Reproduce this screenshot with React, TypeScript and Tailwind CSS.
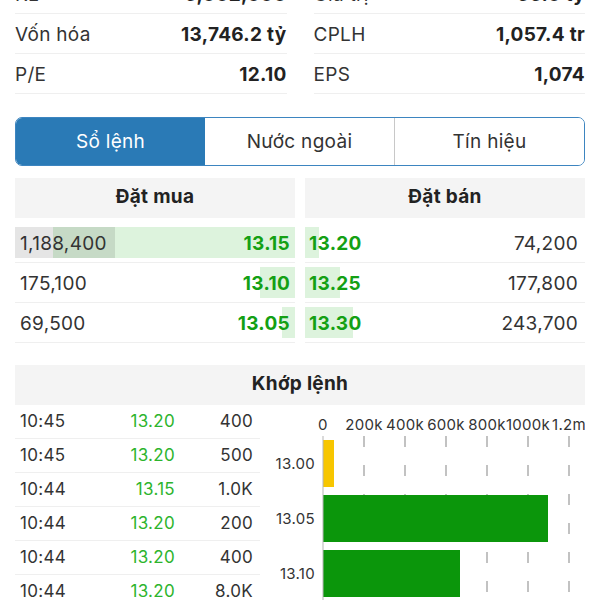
import React from "react";

const stats: [string, string, string, string][] = [
  ["KL", "5,002,000", "Giá trị", "66.0 tỷ"],
  ["Vốn hóa", "13,746.2 tỷ", "CPLH", "1,057.4 tr"],
  ["P/E", "12.10", "EPS", "1,074"],
];

const bids = [
  { vol: "1,188,400", price: "13.15", volW: 100, priceW: 242 },
  { vol: "175,100", price: "13.10", volW: 0, priceW: 35 },
  { vol: "69,500", price: "13.05", volW: 0, priceW: 13 },
];

const asks = [
  { price: "13.20", vol: "74,200", priceW: 14 },
  { price: "13.25", vol: "177,800", priceW: 35 },
  { price: "13.30", vol: "243,700", priceW: 48 },
];

const trades = [
  ["10:45", "13.20", "400"],
  ["10:45", "13.20", "500"],
  ["10:44", "13.15", "1.0K"],
  ["10:44", "13.20", "200"],
  ["10:44", "13.20", "400"],
  ["10:44", "13.20", "8.0K"],
];

function Chart() {
  const ticks = ["0", "200k", "400k", "600k", "800k", "1000k", "1.2m"];
  const x0 = 53;
  const step = 41;
  const bars = [
    { label: "13.00", y: 35, w: 11, color: "#f7c600" },
    { label: "13.05", y: 90, w: 225, color: "#0b960b" },
    { label: "13.10", y: 145, w: 137, color: "#0b960b" },
  ];
  return (
    <svg width="315" height="195" viewBox="0 0 315 195" className="block">
      {ticks.map((t, i) => (
        <text
          key={t}
          x={i === 6 ? 299 : x0 + step * i}
          y={25}
          textAnchor="middle"
          fontSize="15"
          fill="#333"
          fontFamily="Inter, sans-serif"
        >
          {t}
        </text>
      ))}
      {ticks.slice(1).map((t, i) => (
        <line
          key={t}
          x1={x0 + step * (i + 1)}
          x2={x0 + step * (i + 1)}
          y1={31}
          y2={195}
          stroke="#9a9a9a"
          strokeWidth="1.2"
          strokeDasharray="11 18"
        />
      ))}
      {bars.map((b) => (
        <g key={b.label}>
          <rect x={x0} y={b.y} width={b.w} height={47} fill={b.color} />
          <text
            x={45}
            y={b.y + 29}
            textAnchor="end"
            fontSize="15"
            fill="#333"
            fontFamily="Inter, sans-serif"
          >
            {b.label}
          </text>
        </g>
      ))}
      <line x1={x0} x2={x0} y1={31} y2={195} stroke="#b5b5b5" strokeWidth="1" />
    </svg>
  );
}

export default function App() {
  return (
    <div className="w-[600px] h-[600px] overflow-hidden bg-white font-['Inter',sans-serif] text-[#222] tracking-[0.3px]">
      <div className="-mt-[26px] px-[15px]">
        <div className="grid grid-cols-2 gap-x-[27px]">
          {[0, 1].map((col) => (
            <div key={col} className="flex flex-col">
              {stats.map((s) => (
                <div
                  key={s[col * 2]}
                  className="h-[40px] flex items-center justify-between border-b border-[#efefef] text-[19px] pt-[3px]"
                >
                  <span className="text-[#333]">{s[col * 2]}</span>
                  <span className="font-bold">{s[col * 2 + 1]}</span>
                </div>
              ))}
            </div>
          ))}
        </div>

        <div className="mt-[23px] h-[49px] flex rounded-[7px] border border-[#3d85c0] overflow-hidden text-[19px]">
          <div className="flex-1 flex items-center justify-center bg-[#2a7ab6] text-white pt-[1px]">Sổ lệnh</div>
          <div className="flex-1 flex items-center justify-center bg-white text-[#333] pt-[1px]">Nước ngoài</div>
          <div className="flex-1 flex items-center justify-center bg-white text-[#333] border-l border-[#c8c8c8] pt-[1px]">
            Tín hiệu
          </div>
        </div>

        <div className="mt-[12px] grid grid-cols-2 gap-x-[10px]">
          <div className="flex flex-col">
            <div className="h-[40px] flex items-center justify-center bg-[#f4f4f4] font-bold text-[19px] pb-[2px]">Đặt mua</div>
            <div className="mt-[5px]">
              {bids.map((b) => (
                <div key={b.vol} className="relative h-[40px] border-b border-[#efefef] text-[19px]">
                  <div className="absolute top-[4px] bottom-[4px] right-0 bg-[#ddf3dd]" style={{ width: b.priceW }} />
                  {b.volW > 0 && (
                    <div className="absolute top-[4px] bottom-[4px] left-0 bg-[rgba(0,0,0,0.1)]" style={{ width: b.volW }} />
                  )}
                  <div className="relative h-full flex items-center justify-between pl-[5px] pr-[5px] pt-[3px]">
                    <span className="text-[#333]">{b.vol}</span>
                    <span className="font-bold text-[#14a014]">{b.price}</span>
                  </div>
                </div>
              ))}
            </div>
          </div>
          <div className="flex flex-col">
            <div className="h-[40px] flex items-center justify-center bg-[#f4f4f4] font-bold text-[19px] pb-[2px]">Đặt bán</div>
            <div className="mt-[5px]">
              {asks.map((a) => (
                <div key={a.vol} className="relative h-[40px] border-b border-[#efefef] text-[19px]">
                  <div className="absolute top-[4px] bottom-[4px] left-0 bg-[#ddf3dd]" style={{ width: a.priceW }} />
                  <div className="relative h-full flex items-center justify-between pl-[4px] pr-[7px] pt-[3px]">
                    <span className="font-bold text-[#14a014]">{a.price}</span>
                    <span className="text-[#333]">{a.vol}</span>
                  </div>
                </div>
              ))}
            </div>
          </div>
        </div>

        <div className="mt-[22px] h-[40px] flex items-center justify-center bg-[#f4f4f4] font-bold text-[19px] pb-[2px]">
          Khớp lệnh
        </div>

        <div className="grid grid-cols-[245px_1fr] gap-x-[10px]">
          <div className="flex flex-col">
            {trades.map((t, i) => (
              <div
                key={i}
                className="h-[34px] grid grid-cols-[95px_60px_78px] items-center pl-[5px] pr-[7px] border-b border-[#efefef] text-[17px]"
              >
                <span className="text-[#333]">{t[0]}</span>
                <span className="text-right text-[#2db42d]">{t[1]}</span>
                <span className="text-right text-[#333]">{t[2]}</span>
              </div>
            ))}
          </div>
          <div>
            <Chart />
          </div>
        </div>
      </div>
    </div>
  );
}
